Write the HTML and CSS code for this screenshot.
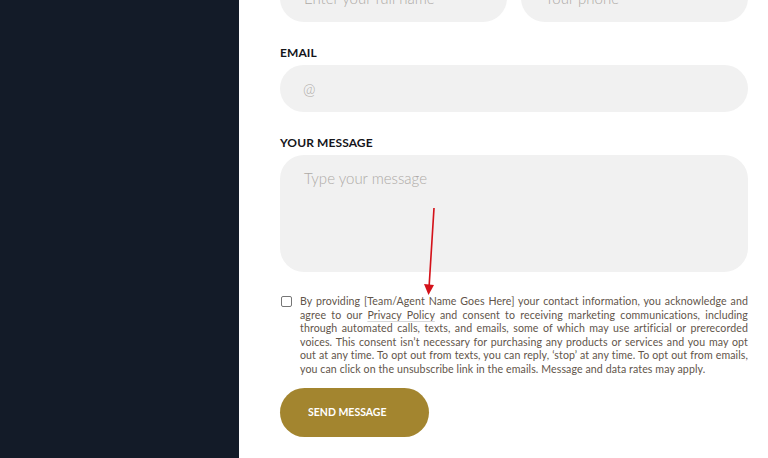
FILE: index.html
```html
<!DOCTYPE html>
<html lang="en">
<head>
<meta charset="utf-8">
<title>Contact</title>
<link rel="stylesheet" href="styles.css">
</head>
<body>
<aside class="sidebar"></aside>
<main class="main">
  <form class="form">
    <div class="row">
      <div class="field"><span class="ph">Enter your full name</span></div>
      <div class="field"><span class="ph">Your phone</span></div>
    </div>
    <label class="label">EMAIL</label>
    <div class="field field-wide"><span class="ph">@</span></div>
    <label class="label">YOUR MESSAGE</label>
    <div class="field textarea"><span class="ph">Type your message</span></div>
    <div class="consent">
      <span class="check"></span>
      <p class="consent-text">By providing [Team/Agent Name Goes Here] your contact information, you acknowledge and agree to our <span class="link">Privacy Policy</span> and consent to receiving marketing communications, including through automated calls, texts, and emails, some of which may use artificial or prerecorded voices. This consent isn’t necessary for purchasing any products or services and you may opt out at any time. To opt out from texts, you can reply, ‘stop’ at any time. To opt out from emails, you can click on the unsubscribe link in the emails. Message and data rates may apply.</p>
    </div>
    <button type="button" class="send">SEND MESSAGE</button>
  </form>
  <svg class="arrow" width="20" height="90" viewBox="0 0 20 90">
    <line x1="14" y1="0" x2="9" y2="80" stroke="#d4121a" stroke-width="1.6"/>
    <polygon points="4,76 14,77 8.5,87" fill="#d4121a"/>
  </svg>
</main>
</body>
</html>
```
FILE: styles.css
```css
* { box-sizing: border-box; }
html, body { margin: 0; height: 100%; }
body {
  display: flex;
  width: 768px;
  height: 458px;
  overflow: hidden;
  background: #fff;
  font-family: Lato, "Open Sans", sans-serif;
}
.sidebar {
  width: 239px;
  flex: none;
  background: #131b28;
}
.main {
  position: relative;
  flex: 1;
  padding: 0 20px 0 41px;
}
.form {
  display: flex;
  flex-direction: column;
  margin-top: -26px;
}
.row {
  display: grid;
  grid-template-columns: 1fr 1fr;
  gap: 14px;
}
.field {
  height: 48px;
  border-radius: 24px;
  background: #f1f1f1;
  display: flex;
  align-items: center;
  padding-left: 24px;
}
.field-wide { height: 47px; padding-left: 23px; }
.ph {
  color: #aeaaa6;
  font-size: 15px;
  font-weight: 300;
}
.label {
  margin-top: 23px;
  margin-bottom: 4px;
  font-size: 12px;
  line-height: 16px;
  font-weight: 700;
  color: #15151a;
  letter-spacing: 0.1px;
}
.textarea {
  height: 117px;
  align-items: flex-start;
  padding-top: 14px;
}
.consent {
  display: flex;
  align-items: flex-start;
  margin-top: 23px;
  gap: 8px;
}
.check {
  flex: none;
  width: 11px;
  height: 11px;
  margin: 1px 0 0 1px;
  border: 1px solid #767676;
  border-radius: 2px;
  background: #fff;
}
.consent-text {
  margin: 0;
  font-size: 10.6px;
  line-height: 13.6px;
  letter-spacing: 0.1px;
  color: #62554a;
  text-align: justify;
  font-weight: 400;
}
.link {
  text-decoration: underline;
  text-decoration-color: #d8d8d8;
  text-underline-offset: 2px;
}
.send {
  align-self: flex-start;
  margin-top: 11px;
  width: 149px;
  height: 49px;
  border: none;
  border-radius: 25px;
  background: #a3852f;
  color: #fff;
  font-family: Lato, sans-serif;
  font-size: 10.5px;
  font-weight: 700;
  text-align: left;
  padding-left: 28px;
}
.arrow {
  position: absolute;
  left: 181px;
  top: 208px;
}
```
